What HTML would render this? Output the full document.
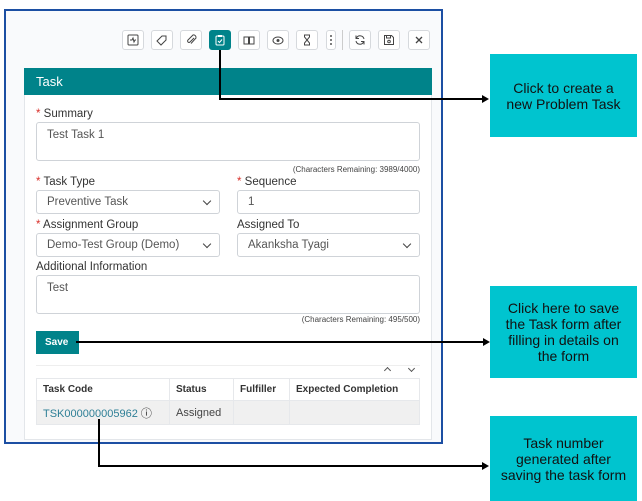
<!DOCTYPE html>
<html><head><style>
*{box-sizing:border-box;margin:0;padding:0}
body{width:642px;height:501px;background:#fff;position:relative;overflow:hidden;font-family:"Liberation Sans",sans-serif;font-size:11px;color:#333}
.abs{position:absolute}
.frame{left:4px;top:9px;width:439px;height:435px;border:2px solid #1c4fa3;background:#f9fafc}
.tb{position:absolute;top:30px;width:22px;height:20px;border:1px solid #d6d9dd;border-radius:3px;background:#fff;display:flex;align-items:center;justify-content:center}
.tb svg{width:12px;height:12px}
.panel{left:24px;top:68px;width:408px;height:372px;background:#fff;border:1px solid #e3e6ea}
.hdr{left:24px;top:68px;width:408px;height:27px;background:#00838a;color:#fff;font-size:13px;padding:6px 12px}
.lbl{font-size:11.5px;color:#333}
.lbl b{color:#d9312b;font-weight:normal}
.inp{border:1px solid #cfd3d8;border-radius:3px;background:#fff;font-size:11.5px;color:#555;padding:0 10px;line-height:22px}
.ta{line-height:14px;padding-top:5px}
.chev{position:absolute;right:9px;top:7px;width:6px;height:6px;border-right:1.5px solid #444;border-bottom:1.5px solid #444;transform:rotate(45deg)}
.cr{font-size:8px;color:#444;text-align:right}
.call{background:#00c4cf;color:#111;font-size:14px;text-align:center;display:flex;align-items:center;justify-content:center;line-height:16px}
.ln{background:#000}
table{border-collapse:collapse;font-size:10px}
th{text-align:left;font-weight:bold;padding:0 6px;height:22px;border:1px solid #e6e8eb;background:#fff;color:#333}
td{padding:0 6px;height:24px;border:1px solid #e6e8eb;background:#f0f0f0;color:#444;font-size:11px}
</style></head><body>
<div class="abs frame"></div>
<div class="tb" style="left:122px"><svg viewBox="0 0 12 12"><rect x="1" y="1" width="10" height="10" rx="1" fill="none" stroke="#444"/><path d="M3 6h2l1-2 1 4 1-2h1" fill="none" stroke="#444"/></svg></div>
<div class="tb" style="left:151px"><svg viewBox="0 0 12 12"><path d="M1 7l5-5h4v4l-5 5z" fill="none" stroke="#444"/></svg></div>
<div class="tb" style="left:180px"><svg viewBox="0 0 12 12"><path d="M9 4L5 8a1.4 1.4 0 0 1-2-2l5-5a2.5 2.5 0 0 1 3 3L6 9.5" fill="none" stroke="#444"/></svg></div>
<div class="tb" style="left:209px;background:#00838a;border-color:#00838a"><svg viewBox="0 0 12 12"><rect x="2" y="2" width="8" height="9" rx="1" fill="none" stroke="#fff"/><rect x="4" y="1" width="4" height="2" fill="#fff"/><path d="M4 7l1.5 1.5L8 5.5" fill="none" stroke="#fff"/></svg></div>
<div class="tb" style="left:238px"><svg viewBox="0 0 12 12"><path d="M1 3h4.5v7H1zM6.5 3H11v7H6.5z" fill="none" stroke="#444"/></svg></div>
<div class="tb" style="left:267px"><svg viewBox="0 0 12 12"><ellipse cx="6" cy="6.5" rx="5" ry="3.5" fill="none" stroke="#444"/><circle cx="6" cy="6.5" r="1.5" fill="#444"/></svg></div>
<div class="tb" style="left:296px"><svg viewBox="0 0 12 12"><path d="M3 1h6M3 11h6M3.5 1v2l2.5 3-2.5 3v2M8.5 1v2L6 6l2.5 3v2" fill="none" stroke="#444"/></svg></div>
<div class="tb" style="left:326px;width:10px"><svg viewBox="0 0 4 12" style="width:4px"><circle cx="2" cy="2" r="1" fill="#555"/><circle cx="2" cy="6" r="1" fill="#555"/><circle cx="2" cy="10" r="1" fill="#555"/></svg></div>
<div class="abs" style="left:342px;top:30px;width:1px;height:20px;background:#ccc"></div>
<div class="tb" style="left:349px"><svg viewBox="0 0 12 12"><path d="M10 5a4 4 0 0 0-7.5-1M2 7a4 4 0 0 0 7.5 1M2 1.5v3h3M10 10.5v-3H7" fill="none" stroke="#444"/></svg></div>
<div class="tb" style="left:378px"><svg viewBox="0 0 12 12"><path d="M1.5 1.5h7l2 2v7h-9z" fill="none" stroke="#444"/><circle cx="6" cy="7.5" r="1.3" fill="none" stroke="#444"/><path d="M3.5 1.5v2.5h4v-2.5" fill="none" stroke="#444"/></svg></div>
<div class="tb" style="left:408px"><svg viewBox="0 0 12 12"><path d="M3 3l6 6M9 3l-6 6" stroke="#444" stroke-width="1.3"/></svg></div>

<div class="abs panel"></div>
<div class="abs hdr">Task</div>

<div class="abs lbl" style="left:36px;top:108px"><b>*</b> Summary</div>
<div class="abs inp ta" style="left:36px;top:122px;width:384px;height:39px">Test Task 1</div>
<div class="abs cr" style="left:236px;top:165px;width:184px">(Characters Remaining: 3989/4000)</div>
<div class="abs lbl" style="left:36px;top:176px"><b>*</b> Task Type</div>
<div class="abs lbl" style="left:237px;top:176px"><b>*</b> Sequence</div>
<div class="abs inp" style="left:36px;top:190px;width:184px;height:24px">Preventive Task<span class="chev"></span></div>
<div class="abs inp" style="left:237px;top:190px;width:183px;height:24px">1</div>
<div class="abs lbl" style="left:36px;top:219px"><b>*</b> Assignment Group</div>
<div class="abs lbl" style="left:237px;top:219px">Assigned To</div>
<div class="abs inp" style="left:36px;top:233px;width:184px;height:24px">Demo-Test Group (Demo)<span class="chev"></span></div>
<div class="abs inp" style="left:237px;top:233px;width:183px;height:24px">Akanksha Tyagi<span class="chev"></span></div>
<div class="abs lbl" style="left:36px;top:261px">Additional Information</div>
<div class="abs inp ta" style="left:36px;top:275px;width:384px;height:39px">Test</div>
<div class="abs cr" style="left:236px;top:315px;width:184px">(Characters Remaining: 495/500)</div>
<div class="abs" style="left:36px;top:331px;width:43px;height:23px;background:#00838a;color:#fff;font-size:10px;font-weight:bold;padding:6px 9px">Save</div>
<div class="abs" style="left:36px;top:365px;width:384px;height:1px;background:#eee"></div>
<div class="abs" style="left:385px;top:368px;width:5px;height:5px;border-left:1.3px solid #555;border-top:1.3px solid #555;transform:rotate(45deg)"></div>
<div class="abs" style="left:409px;top:366px;width:5px;height:5px;border-right:1.3px solid #555;border-bottom:1.3px solid #555;transform:rotate(45deg)"></div>
<table class="abs" style="left:36px;top:378px;width:384px">
<tr><th style="width:133px">Task Code</th><th style="width:64px">Status</th><th style="width:56px">Fulfiller</th><th>Expected Completion</th></tr>
<tr><td style="color:#2e7f96">TSK000000005962 <span style="color:#222">ⓘ</span></td><td>Assigned</td><td></td><td></td></tr>
</table>

<div class="abs ln" style="left:219px;top:50px;width:2px;height:50px"></div>
<div class="abs ln" style="left:219px;top:98px;width:264px;height:2px"></div>
<div class="abs" style="left:482px;top:95px;border-left:7px solid #000;border-top:4px solid transparent;border-bottom:4px solid transparent"></div>
<div class="abs ln" style="left:76px;top:341px;width:408px;height:2px"></div>
<div class="abs" style="left:483px;top:338px;border-left:7px solid #000;border-top:4px solid transparent;border-bottom:4px solid transparent"></div>
<div class="abs ln" style="left:98px;top:419px;width:2px;height:48px"></div>
<div class="abs ln" style="left:98px;top:465px;width:385px;height:2px"></div>
<div class="abs" style="left:482px;top:462px;border-left:7px solid #000;border-top:4px solid transparent;border-bottom:4px solid transparent"></div>

<div class="abs call" style="left:490px;top:54px;width:147px;height:83px">Click to create a<br>new Problem Task</div>
<div class="abs call" style="left:490px;top:286px;width:147px;height:92px">Click here to save<br>the Task form after<br>filling in details on<br>the form</div>
<div class="abs call" style="left:490px;top:416px;width:147px;height:85px">Task number<br>generated after<br>saving the task form</div>
</body></html>
